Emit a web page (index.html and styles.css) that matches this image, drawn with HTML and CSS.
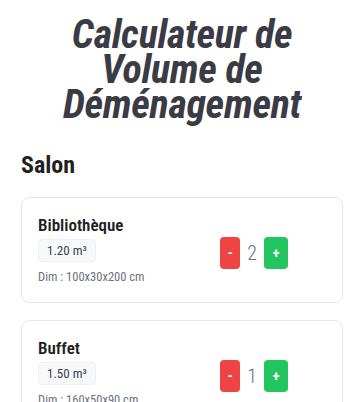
FILE: index.html
```html
<!DOCTYPE html>
<html lang="fr">
<head>
<meta charset="utf-8">
<title>Calculateur de Volume de Déménagement</title>
<link rel="stylesheet" href="styles.css">
</head>
<body>
<main class="page">
  <h1 class="title">Calculateur de Volume de Déménagement</h1>
  <section class="room">
    <h2 class="room-name">Salon</h2>
    <div class="card">
      <div class="info">
        <div class="item-name">Bibliothèque</div>
        <span class="badge">1.20 m³</span>
        <div class="dim">Dim : 100x30x200 cm</div>
      </div>
      <div class="qty">
        <button class="btn minus">-</button>
        <span class="count">2</span>
        <button class="btn plus">+</button>
      </div>
    </div>
    <div class="card">
      <div class="info">
        <div class="item-name">Buffet</div>
        <span class="badge">1.50 m³</span>
        <div class="dim">Dim : 160x50x90 cm</div>
      </div>
      <div class="qty">
        <button class="btn minus">-</button>
        <span class="count">1</span>
        <button class="btn plus">+</button>
      </div>
    </div>
  </section>
</main>
</body>
</html>
```
FILE: styles.css
```css
* { box-sizing: border-box; }
html, body { margin: 0; padding: 0; background: #ffffff; }
body {
  font-family: "Roboto Condensed", Roboto, "Liberation Sans", sans-serif;
  font-stretch: condensed;
  color: #1f2937;
}
.page { padding: 17px 17px 0 21px; }
.title {
  margin: 0 0 27px;
  text-align: center;
  font-size: 40px;
  line-height: 35px;
  font-weight: 700;
  font-style: italic;
  color: #3b3b45;
  letter-spacing: -0.3px;
}
.room-name {
  margin: 0 0 16px;
  font-size: 24px;
  line-height: 32px;
  font-weight: 700;
  color: #1f1f24;
}
.card {
  display: flex;
  align-items: center;
  border: 1px solid #e5e7eb;
  border-radius: 8px;
  padding: 15px 16px 16px 16px;
  margin-bottom: 17px;
}
.info { flex: 1; }
.item-name { font-size: 17px; font-weight: 600; color: #1f1f24; line-height: 24px; }
.badge {
  display: inline-block;
  margin-top: 2px;
  padding: 3px 8px;
  line-height: 15px;
  background: #f7f8fa;
  border: 1px solid #eef0f3;
  border-radius: 4px;
  font-size: 13px;
  color: #374151;
}
.dim { margin-top: 6px; font-size: 12.5px; line-height: 18px; color: #6b7280; }
.qty { display: flex; align-items: center; gap: 7px; margin-right: 38px; padding-top: 6px; }
.btn {
  border: 0;
  height: 32px;
  border-radius: 4px;
  color: #fff;
  font-family: inherit;
  font-weight: 700;
  font-size: 14px;
  padding: 0;
}
.minus { width: 20px; background: #ef4444; }
.plus { width: 24px; background: #22c55e; }
.count { font-size: 20px; font-weight: 300; color: #6b7280; }
```
